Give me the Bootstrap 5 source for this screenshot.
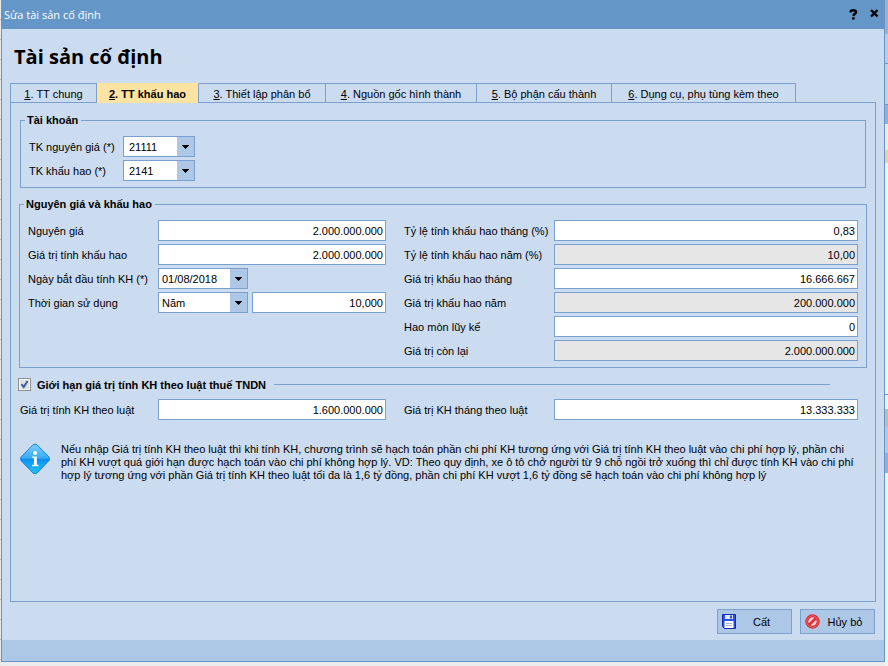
<!DOCTYPE html>
<html lang="vi">
<head>
<meta charset="utf-8">
<meta name="viewport" content="width=device-width, initial-scale=1">
<title>Sửa tài sản cố định</title>
<link href="https://cdn.jsdelivr.net/npm/bootstrap@5.3.0/dist/css/bootstrap.min.css" rel="stylesheet">
<style>
:root{--line:#7ba0cd;--frame:#6496c8;--face:#cbdbf0;--btn:#adc7e6}
body{font:11px/14px "Liberation Sans",Arial,sans-serif;color:#000;padding:0 3px 4px 1px;
 background:
 linear-gradient(#9db0cf 0 34px,#bccbe0 34px 63px,#7f97c0 63px 64px,#c3d1e5 64px 104px,#7f97c0 104px 105px,#94addb 105px 124px,#f1eccb 124px 150px,#e9d391 150px 163px,#f3f3f3 163px 394px,#6c94c4 394px 395px,#f0f0f0 395px 409px,#bdbdbd 409px 427px,#b4c8e3 427px 453px,#94addb 453px 473px,#f1f1f1 473px) right top/3px 100% no-repeat,
 repeating-linear-gradient(#e8e8e8 0 19px,#b8b8b8 19px 20px) left top/1px 100% no-repeat,
 #ececec}
.dlg{border:1px solid var(--frame);border-top:0;background:var(--face)}
.dlg-title{background:var(--frame);height:29px;margin:0 -1px;padding:0 4px 0 3px;font:11px/29px "Open Sans","Segoe UI",sans-serif;color:#fff}
.cap-btn{width:13px;height:13px;padding:0;border:0;background:none;line-height:0}
.dlg-head{font:700 20px/28px "Open Sans","Segoe UI",sans-serif;margin:14px 12px 12px}
.tabs{padding-left:8px}
.tabs button{height:20px;padding:0;border:1px solid var(--line);border-left-width:0;border-bottom:0;background:none;font:inherit;color:#000}
.tabs li:first-child button{border-left-width:1px}
.tabs .current{background:#ffe3a0;font-weight:bold;border-top-color:#ffe3a0;position:relative;height:20px}
.tabs li{height:19px}
.w-a{width:87px}.w-b{width:102px}.w-c{width:127px}.w-d{width:151px}.w-e{width:135px}.w-f{width:184px}
.pane{margin:0 8px;border:1px solid var(--line);padding:10px 8px 0}
fieldset.grp{border:1px solid var(--line)}
fieldset.grp legend{float:none;width:auto;font:bold 11px/14px "Liberation Sans",Arial,sans-serif;margin:0 0 0 4px;padding:0 3px 0 2px}
fieldset.acct-box{margin:0 1px}
.fld{height:21px;min-width:0;border:1px solid var(--line);border-radius:0;background-color:#fff;color:#000;font:inherit;padding:0 2px;outline-offset:-1px}
.fld[readonly]{background-color:#e6e6e6}
.num{text-align:right}
select.fld{appearance:none;padding:0 20px 0 5px;background:url("data:image/svg+xml,%3Csvg xmlns='http://www.w3.org/2000/svg' width='17' height='19'%3E%3Cpath fill='%23adc7e6' d='M0 0h17v19H0z'/%3E%3Cpath d='M5 8h7v1h-1v1h-1v1H9v1H8v-1H7v-1H6V9H5z'/%3E%3C/svg%3E") right center no-repeat #fff}
select.term{width:90px;padding-left:3px}
.acct{display:grid;grid-template-columns:94px 72px;row-gap:3px;align-items:center;padding:9px 8px 6px}
.form4{display:grid;grid-template-columns:130px minmax(0,3fr) 168px minmax(0,4fr);row-gap:3px;align-items:center}
.form4 .right{grid-column:3;padding-left:18px}
fieldset.money{margin-top:9px}
.cost{padding:9px 8px 6px}
.law-head{height:13px;margin:10px 37px 8px -1px}
.tick{appearance:none;width:13px;height:13px;margin:0 6px 0 0;border:1px solid #8e8f8f;outline:0;background:url("data:image/svg+xml,%3Csvg xmlns='http://www.w3.org/2000/svg' width='11' height='11'%3E%3Cpath fill='%23dde1e6' d='M1 1h9v9H1z'/%3E%3C/svg%3E") #f6f6f6}
.tick:checked{background-image:url("data:image/svg+xml,%3Csvg xmlns='http://www.w3.org/2000/svg' width='11' height='11'%3E%3Cpath fill='%23dde1e6' d='M1 1h9v9H1z'/%3E%3Cpath fill='none' stroke='%233f5a9c' stroke-width='1.9' d='M2.5 5.2 4.7 8 8.6 2'/%3E%3C/svg%3E")}
.rule{height:1px;background:var(--line)}
.law{grid-template-columns:138px minmax(0,3fr) 168px minmax(0,4fr);padding:0 9px 0 1px}
.note{margin:23px 0 0;padding-left:1px}
.note p{line-height:13px;margin:0 0 0 11px;white-space:nowrap}
.acts{padding:7px 9px 6px 0}
.act{width:75px;height:25px;border:1px solid var(--line);background:var(--btn);padding:0 4px;font:inherit;color:#000}
.act span{flex:1;text-align:center}
.foot{height:21px;background:var(--btn)}
</style>
</head>
<body class="d-flex flex-column min-vh-100">
<main class="dlg d-flex flex-column flex-grow-1">
 <header class="dlg-title d-flex align-items-center">
  <span class="me-auto">Sửa tài sản cố định</span>
  <button class="cap-btn me-2" type="button" aria-label="Trợ giúp"><svg width="13" height="13"><path fill="none" stroke="#000" stroke-width="2.4" d="M3.7 4.500V3.6Q4 2.2 6.4 2.2T9 4Q9 5.2 7.8 5.9T6.4 8"/><path d="M5 9.3h2.700V11.500H5z"/></svg></button>
  <button class="cap-btn" type="button" aria-label="Đóng"><svg width="13" height="13"><path stroke="#000" stroke-width="2.4" d="m3 2 6.500 6.500M9.500 2 3 8.500"/></svg></button>
 </header>
 <h1 class="dlg-head">Tài sản cố định</h1>
 <ul class="tabs d-flex list-unstyled mb-0" role="tablist">
  <li><button class="w-a" type="button" role="tab"><u>1</u>. TT chung</button></li>
  <li><button class="w-b current" type="button" role="tab" aria-selected="true"><u>2</u>. TT khấu hao</button></li>
  <li><button class="w-c" type="button" role="tab"><u>3</u>. Thiết lập phân bổ</button></li>
  <li><button class="w-d" type="button" role="tab"><u>4</u>. Nguồn gốc hình thành</button></li>
  <li><button class="w-e" type="button" role="tab"><u>5</u>. Bộ phận cấu thành</button></li>
  <li><button class="w-f" type="button" role="tab"><u>6</u>. Dụng cụ, phụ tùng kèm theo</button></li>
 </ul>
 <section class="pane flex-grow-1">
  <fieldset class="grp acct-box">
   <legend>Tài khoản</legend>
   <div class="acct">
    <label for="tk1">TK nguyên giá (*)</label><select id="tk1" class="fld"><option>21111</option></select>
    <label for="tk2">TK khấu hao (*)</label><select id="tk2" class="fld"><option>2141</option></select>
   </div>
  </fieldset>
  <fieldset class="grp money">
   <legend>Nguyên giá và khấu hao</legend>
   <div class="form4 cost">
    <label for="a1">Nguyên giá</label><input id="a1" class="fld num" value="2.000.000.000">
    <label class="right" for="b1">Tỷ lệ tính khấu hao tháng (%)</label><input id="b1" class="fld num" value="0,83">
    <label for="a2">Giá trị tính khấu hao</label><input id="a2" class="fld num" value="2.000.000.000">
    <label class="right" for="b2">Tỷ lệ tính khấu hao năm (%)</label><input id="b2" class="fld num" value="10,00" readonly>
    <label for="a3">Ngày bắt đầu tính KH (*)</label><div class="d-flex"><select id="a3" class="fld term"><option>01/08/2018</option></select></div>
    <label class="right" for="b3">Giá trị khấu hao tháng</label><input id="b3" class="fld num" value="16.666.667">
    <label for="a4">Thời gian sử dụng</label><div class="d-flex gap-1"><select id="a4" class="fld term flex-shrink-0"><option>Năm</option></select><input class="fld num flex-fill" size="1" aria-label="Số năm sử dụng" value="10,000"></div>
    <label class="right" for="b4">Giá trị khấu hao năm</label><input id="b4" class="fld num" value="200.000.000" readonly>
    <label class="right" for="b5">Hao mòn lũy kế</label><input id="b5" class="fld num" value="0">
    <label class="right" for="b6">Giá trị còn lại</label><input id="b6" class="fld num" value="2.000.000.000" readonly>
   </div>
  </fieldset>
  <div class="law-head d-flex align-items-center">
   <input id="lim" class="tick" type="checkbox" checked><label class="fw-bold" for="lim">Giới hạn giá trị tính KH theo luật thuế TNDN</label><div class="rule flex-fill ms-2"></div>
  </div>
  <div class="form4 law">
   <label for="l1">Giá trị tính KH theo luật</label><input id="l1" class="fld num" value="1.600.000.000">
   <label class="right" for="l2">Giá trị KH tháng theo luật</label><input id="l2" class="fld num" value="13.333.333">
  </div>
  <div class="note d-flex align-items-start">
   <svg class="flex-shrink-0" width="30" height="32" viewBox="0 0 30 32" aria-hidden="true">
    <defs><linearGradient id="blu" x1="0" y1="0" x2="0" y2="1"><stop offset="0" stop-color="#7fd0ff"/><stop offset=".48" stop-color="#35abf6"/><stop offset=".5" stop-color="#0a8df0"/><stop offset="1" stop-color="#23c5ff"/></linearGradient></defs>
    <path fill="url(#blu)" stroke="#1583d8" stroke-linejoin="round" d="M13 1.800q2-1.500 4 0l11.800 12q1.500 2.200 0 4L17 30q-2 1.500-4 0L1.200 17.800q-1.500-2 0-4z"/>
    <circle cx="15" cy="10" r="2.100" fill="#fff"/><path fill="#fff" d="M12.300 13.500h4.500v8.300h1.700v1.500h-6.300v-1.500h1.700v-6.800h-1.600z"/>
   </svg>
   <p>Nếu nhập Giá trị tính KH theo luật thì khi tính KH, chương trình sẽ hạch toán phần chi phí KH tương ứng với Giá trị tính KH theo luật vào chi phí hợp lý, phần chi<br>phí KH vượt quá giới hạn được hạch toán vào chi phí không hợp lý. VD: Theo quy định, xe ô tô chở người từ 9 chỗ ngồi trở xuống thì chỉ được tính KH vào chi phí<br>hợp lý tương ứng với phần Giá trị tính KH theo luật tối đa là 1,6 tỷ đồng, phần chi phí KH vượt 1,6 tỷ đồng sẽ hạch toán vào chi phí không hợp lý</p>
  </div>
 </section>
 <div class="acts d-flex justify-content-end gap-2">
  <button class="act d-flex align-items-center" type="button"><svg width="14" height="15"><path fill="#2b50e8" stroke="#1129b5" d="M.5.5h13v14H2.500L.5 12.500z"/><path fill="#e4e6ee" d="M3 1h8v4H3z"/><path fill="#2b50e8" d="M8 1.500h2v3H8z"/><path fill="#fff" d="M2.500 7h9v7h-9z"/><path stroke="#aab2cc" d="M4 9.500h6M4 11.500h6"/></svg><span>Cất</span></button>
  <button class="act d-flex align-items-center" type="button"><svg width="15" height="15"><circle cx="7.500" cy="7.500" r="5.700" fill="#f7cfd0" stroke="#d8262e" stroke-width="3"/><path stroke="#d3343c" stroke-width="2.600" d="m3.500 11.500 8-8"/><circle cx="7.500" cy="7.500" r="5.700" fill="none" stroke="#f0696c"/></svg><span>Hủy bỏ</span></button>
 </div>
 <footer class="foot"></footer>
</main>
<script src="https://cdn.jsdelivr.net/npm/bootstrap@5.3.0/dist/js/bootstrap.bundle.min.js"></script>
</body>
</html>
